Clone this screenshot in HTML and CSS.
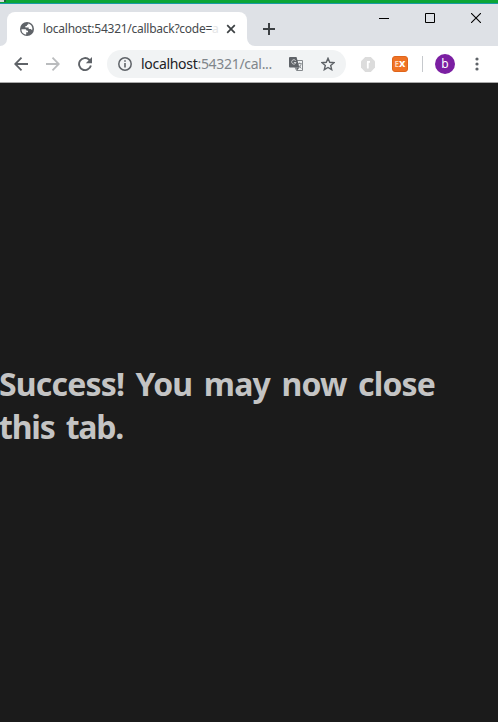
FILE: index.html
```html
<!DOCTYPE html>
<html lang="en">
<head>
<meta charset="utf-8">
<title>localhost:54321/callback</title>
<link rel="stylesheet" href="styles.css">
</head>
<body>
<div class="window">
  <div class="backdrop"></div>
  <header class="tabstrip">
    <div class="previous-tab"></div>
    <div class="tab">
      <svg class="globe" width="14" height="14" viewBox="0 0 14 14"><circle cx="7" cy="7" r="7" fill="#5f6368"/><path d="M1.500 7.200H5c1 0 1.600.7 1.600 1.600H8v1.500H6.200v2.300C3.400 12.400 1.300 10 1.500 7.200zM8.200 1.500c2.400.5 4.200 2.700 4.200 5.300l-.3 1.500c-.6-.6-1-1.300-2-1.300H8.700V5.600H5.400V4h1.500V2.700h1.300z" fill="#fff"/></svg>
      <span class="tab-title">localhost:54321/callback?code=<span class="faded">a</span></span>
      <svg class="tab-close" width="10" height="10" viewBox="0 0 10 10"><path d="M1.200 1.200l7.600 7.600M8.800 1.200L1.200 8.800" stroke="#3c4043" stroke-width="1.700"/></svg>
    </div>
    <div class="after-tab"></div>
    <svg class="new-tab" width="12" height="12" viewBox="0 0 12 12"><path d="M6 0v12M0 6h12" stroke="#3c4043" stroke-width="2"/></svg>
    <div class="controls">
      <svg width="10" height="11" viewBox="0 0 10 11"><path d="M0 9.500h10" stroke="#000"/></svg>
      <svg width="10" height="10" viewBox="0 0 10 10"><path d="M.5.5h9v9h-9z" fill="none" stroke="#000"/></svg>
      <svg width="10" height="10" viewBox="0 0 10 10"><path d="M0 0l10 10M10 0L0 10" stroke="#000" stroke-width="1.100"/></svg>
    </div>
  </header>
  <nav class="toolbar">
    <svg class="back" width="14" height="14" viewBox="0 0 14 14"><path d="M14 7H1.500M7.500.7L1.200 7l6.300 6.300" fill="none" stroke="#5f6368" stroke-width="1.800"/></svg>
    <svg class="forward" width="14" height="14" viewBox="0 0 14 14"><path d="M0 7h12.500M6.500.7L12.800 7l-6.300 6.300" fill="none" stroke="#babcbe" stroke-width="1.800"/></svg>
    <svg class="reload" width="14" height="14" viewBox="0 0 14 14"><path d="M12.900 8.500A6 6 0 1 1 11.200 2.700L12 3.500" fill="none" stroke="#5f6368" stroke-width="1.900"/><path d="M14 0v6.200H7.800z" fill="#5f6368"/></svg>
    <div class="address">
      <svg class="info" width="14" height="14" viewBox="0 0 14 14"><circle cx="7" cy="7" r="6.200" fill="none" stroke="#5f6368" stroke-width="1.500"/><path d="M7 6v4.500M7 3.300v1.500" stroke="#5f6368" stroke-width="1.600"/></svg>
      <span class="url"><span class="host">localhost</span>:54321/cal...</span>
      <svg class="translate" width="14" height="14" viewBox="0 0 14 14"><path d="M5 3.500h8.500v10H7.500L6 10" fill="#f1f3f4" stroke="#85898d"/><path d="M1 0h6.500l3 10.500H1a1 1 0 0 1-1-1V1a1 1 0 0 1 1-1z" fill="#5f6368"/><path d="M6.700 3.700A2.200 2.200 0 1 0 7 5.500H4.900" fill="none" stroke="#d0d2d4"/><path d="M8.800 6.500h3.900M10.700 5.500v1M12.200 6.700c-.3 2-1.300 3.200-2.500 4M9.700 8.200l2.600 3.300" fill="none" stroke="#85898d" stroke-width=".9"/><path d="M7 10.500h3.500L8 13.500z" fill="#5f6368"/></svg>
      <svg class="star" width="14" height="14" viewBox="0 0 14 14"><path d="M7 1.300l1.700 4 4.300.4-3.300 2.800 1 4.200L7 10.500l-3.700 2.200 1-4.200L1 5.700l4.300-.4z" fill="none" stroke="#5f6368" stroke-width="1.400"/></svg>
    </div>
    <svg class="extension" width="14" height="15" viewBox="0 0 14 15"><path d="M4.200 0h5.600L14 4.300v6.200L9.800 15H4.200L0 10.500V4.300z" fill="#dcdcdc"/><path d="M6.800 11.500V5M6 4.800h3" fill="none" stroke="#fff" stroke-width="1.800"/></svg>
    <div class="ex"><span class="ex-e">E</span>x</div>
    <div class="divider"></div>
    <div class="avatar">b</div>
    <svg class="menu" width="4" height="14" viewBox="0 0 4 14"><g fill="#5f6368"><circle cx="2" cy="2" r="1.600"/><circle cx="2" cy="7" r="1.600"/><circle cx="2" cy="12" r="1.600"/></g></svg>
  </nav>
  <main class="page"><h1><span class="line-one">Success! You may now close</span> <span class="line-two">this tab.</span></h1></main>
</div>
</body>
</html>
```
FILE: styles.css
```css
* { box-sizing: border-box; }
body { margin: 0; background: #1b1b1b; font-family: "Noto Sans", sans-serif; }
svg { display: block; flex: none; }
.window { display: flex; flex-direction: column; width: 498px; height: 722px; overflow: hidden; }
.backdrop { height: 4px; background: linear-gradient(90deg, #d8d8d8 4px, #21623e 4px 6px, transparent 6px), #0ba536; background-size: 100% 2px, auto; background-repeat: no-repeat; border-bottom: 1px solid #1999a5; }
.tabstrip { display: flex; height: 42px; background: #dee1e6; }
.previous-tab { width: 7px; background: #fff; }
.previous-tab::before { content: ""; display: block; height: 42px; background: #dee1e6; border-bottom-right-radius: 8px; }
.tab { display: flex; align-items: center; width: 240px; height: 34px; margin-top: 8px; padding-left: 13px; background: #fff; border-radius: 8px 8px 0 0; }
.tab-title { width: 178px; margin-left: 9px; white-space: nowrap; font-size: 12px; line-height: 18px; letter-spacing: -.26px; color: #45494c; }
.faded { color: #e4e5e6; }
.tab-close { margin-left: 5px; }
.after-tab { width: 8px; background: #fff; }
.after-tab::before { content: ""; display: block; height: 42px; background: #dee1e6; border-bottom-left-radius: 8px; }
.new-tab { margin: 19px 0 0 8px; }
.controls { display: flex; gap: 36px; margin: 9px 17px 0 auto; }
.controls svg:first-child { margin-top: -4px; }
.toolbar { display: flex; align-items: center; flex: none; height: 37px; padding-left: 14px; background: #fff; border-bottom: 1px solid #aaa; }
.forward, .reload { margin-left: 18px; }
.address { display: flex; align-items: center; width: 239px; height: 28px; margin-left: 15px; padding-left: 11px; border-radius: 14px; background: #f1f3f4; }
.url { width: 148px; margin-left: 9px; white-space: nowrap; font-size: 14px; line-height: 20px; letter-spacing: -.3px; color: #80868b; }
.host { color: #202124; }
.star { margin-left: 18px; }
.extension { margin-left: 15px; }
.ex { display: flex; align-items: center; justify-content: center; width: 16px; height: 16px; margin-left: 17px; border-radius: 3px; background: #ef7325; border: 1px solid #df651b; color: #fff; font-size: 11px; line-height: 14px; font-weight: 700; padding-bottom: 2px; }
.ex-e { font-size: 8px; color: #ffd4b5; padding-top: 2px; }
.divider { width: 1px; height: 16px; margin-left: 14px; background: #c6c9cd; }
.avatar { width: 20px; height: 20px; margin-left: 12px; border-radius: 50%; background: #7b1fa2; color: #fff; font-size: 12px; line-height: 19px; text-align: center; }
.menu { margin-left: 20px; }
.page { display: flex; flex: 1; align-items: center; background: #1b1b1b; }
h1 { margin: 4px 0 0 -1px; font-size: 32px; line-height: 43px; font-weight: 700; color: #c4c4c4; white-space: nowrap; }
h1 span { display: block; }
.line-one { letter-spacing: -.83px; word-spacing: 4px; }
.line-two { letter-spacing: -1.200px; word-spacing: 4px; }
```
